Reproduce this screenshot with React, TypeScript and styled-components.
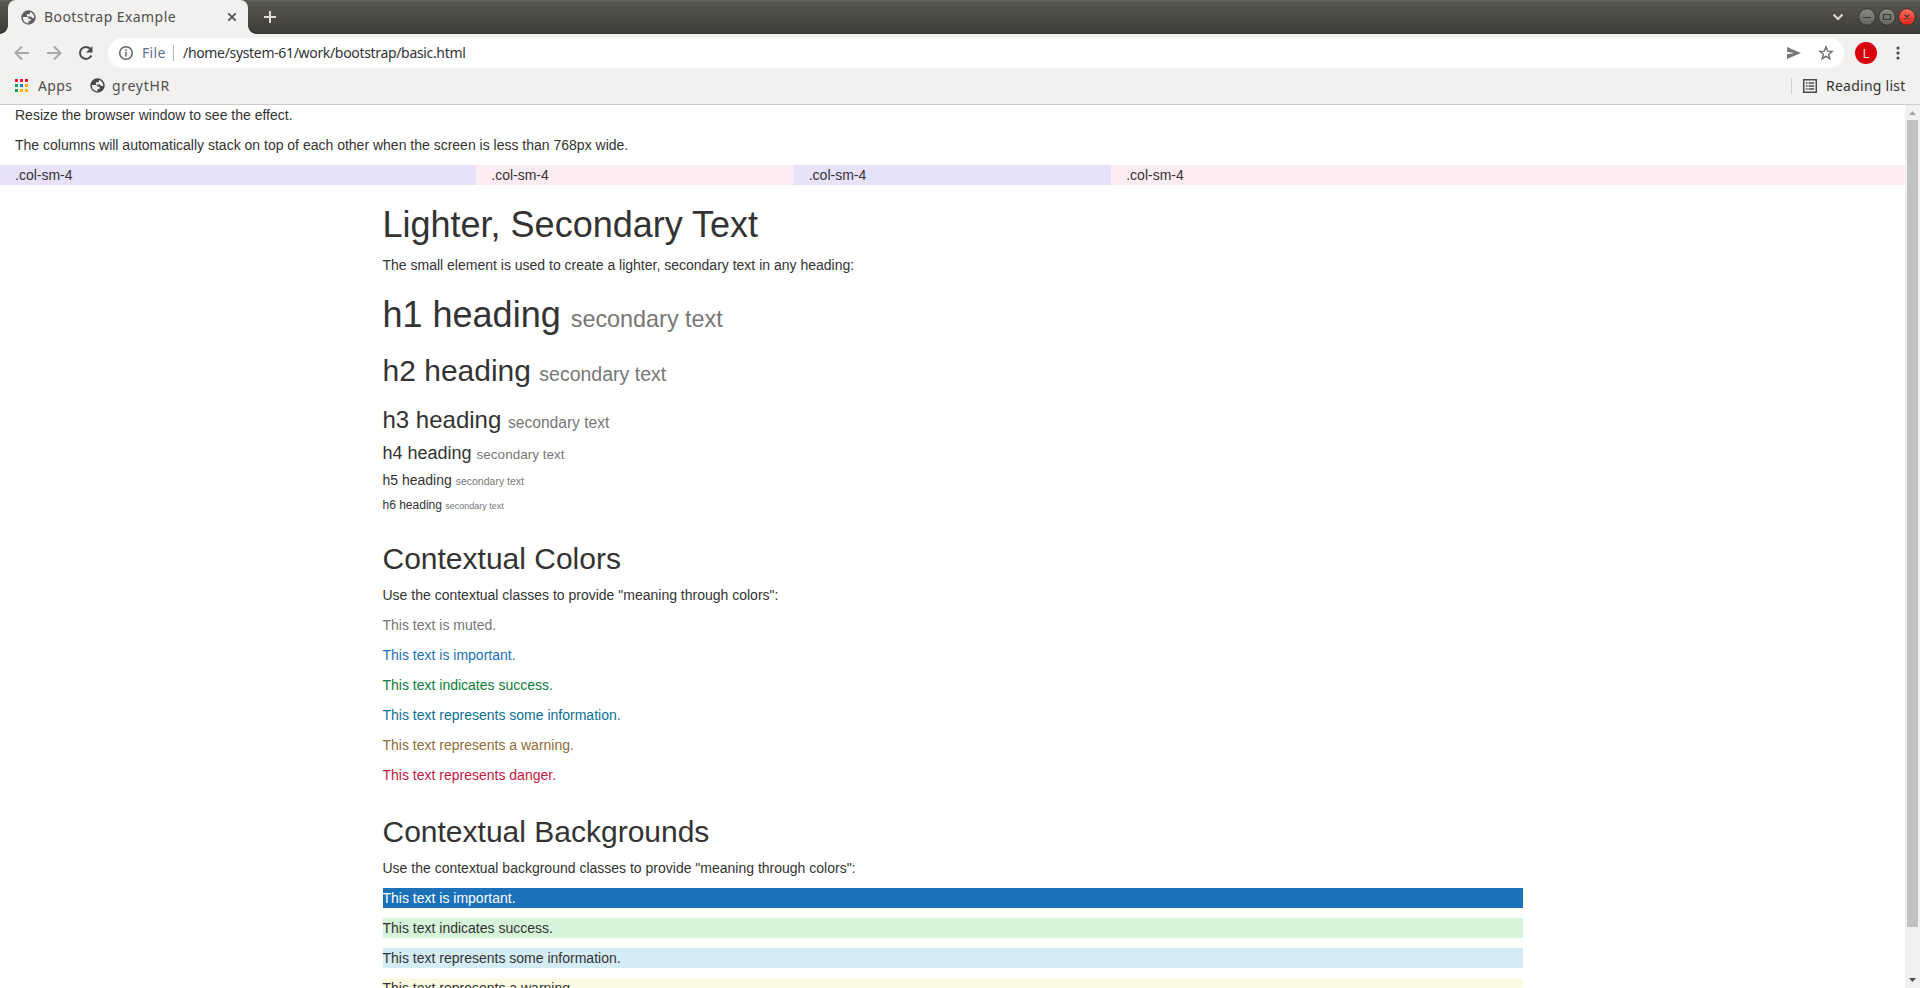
import React from 'react';
import styled, { createGlobalStyle } from 'styled-components';

const GlobalStyle = createGlobalStyle`
  * { box-sizing: border-box; }
  html, body { margin: 0; padding: 0; overflow: hidden; background: #fff; }
`;

const Window = styled.div`
  display: flex;
  flex-direction: column;
  width: 1920px;
  height: 988px;
  overflow: hidden;
  background: #fff;
`;

const uiFont = `'Noto Sans', 'Open Sans', sans-serif`;

const TabStrip = styled.div`
  display: flex;
  align-items: flex-end;
  flex: none;
  height: 34px;
  padding-left: 8px;
  background: linear-gradient(#65655a 0, #59584e 2px, #3c3b37 33px, #35342f 34px);
`;

const Tab = styled.div`
  position: relative;
  display: flex;
  align-items: center;
  width: 240px;
  height: 34px;
  padding: 0 9px 0 13px;
  border-radius: 8px 8px 0 0;
  background: #f2f1f0;
  &::before, &::after {
    content: '';
    position: absolute;
    bottom: 0;
    width: 8px;
    height: 8px;
  }
  &::before { left: -8px; background: radial-gradient(circle at 0 0, transparent 7.5px, #f2f1f0 8px); }
  &::after { right: -8px; background: radial-gradient(circle at 100% 0, transparent 7.5px, #f2f1f0 8px); }
`;

const Label = styled.span<{ $width: number; $color?: string; $tracking?: number }>`
  flex: none;
  width: ${(p) => p.$width}px;
  font: 14px/20px ${uiFont};
  letter-spacing: ${(p) => p.$tracking ?? 0}px;
  color: ${(p) => p.$color ?? '#4f4f4d'};
  white-space: nowrap;
`;

const TabTitle = styled(Label)`
  margin: 0 auto 0 8px;
`;

const NewTab = styled.div`
  display: flex;
  align-items: center;
  height: 34px;
  margin-left: 15px;
`;

const WindowControls = styled.div`
  display: flex;
  align-items: center;
  height: 34px;
  margin-left: auto;
  padding-right: 4px;
`;

const Toolbar = styled.div`
  display: flex;
  align-items: center;
  flex: none;
  height: 38px;
  background: #f2f1f0;
`;

const NavButtons = styled.div`
  display: flex;
  align-items: center;
  gap: 12px;
  width: 108px;
  padding-left: 12px;
`;

const AddressBar = styled.div`
  display: flex;
  align-items: center;
  width: 1736px;
  height: 30px;
  padding: 0 9px 0 9px;
  border-radius: 15px;
  background: #fff;
`;

const Scheme = styled(Label)`
  margin-left: 7px;
`;

const SchemeDivider = styled.div`
  width: 1px;
  height: 16px;
  margin: 0 9px 0 7px;
  background: #b5b5b5;
`;

const AddressActions = styled.div`
  display: flex;
  gap: 14px;
  margin-left: auto;
`;

const Avatar = styled.div`
  width: 22px;
  height: 22px;
  margin-left: 11px;
  border-radius: 50%;
  background: #d8000c;
  color: #f3dfdc;
  font: 13px/22px ${uiFont};
  text-align: center;
`;

const MenuDots = styled.svg`
  margin-left: 18px;
`;

const BookmarkBar = styled.div`
  display: flex;
  align-items: center;
  flex: none;
  height: 33px;
  padding: 0 14px 5px 12px;
  border-bottom: 1px solid #cdccca;
  background: #f2f1f0;
`;

const Bookmark = styled.div`
  display: flex;
  align-items: center;
  gap: 7px;
  margin-right: 16px;
`;

const ReadingList = styled.div`
  display: flex;
  align-items: center;
  gap: 8px;
  height: 16px;
  margin-left: auto;
  padding-left: 10px;
  border-left: 1px solid #d0cfcd;
`;

const Viewport = styled.div`
  display: flex;
  flex: 1;
  min-height: 0;
  overflow: hidden;
`;

const Page = styled.main`
  width: 1905px;
  overflow: hidden;
  font: 14px/20px 'Liberation Sans', Arial, sans-serif;
  color: #333;
`;

const Fluid = styled.div`
  display: flow-root;
  padding: 0 15px;
`;

const Container = styled.section`
  display: flow-root;
  width: 1170px;
  margin: 0 auto;
  padding: 0 15px;
`;

const Row = styled.div`
  display: flex;
  margin: 0 -15px;
`;

const Column = styled.div<{ $span: number; $bg: string }>`
  width: ${(p) => (p.$span / 12) * 100}%;
  padding: 0 15px;
  background: ${(p) => p.$bg};
`;

const Text = styled.p<{ $color?: string; $bg?: string }>`
  margin: 0 0 10px;
  color: ${(p) => p.$color ?? 'inherit'};
  background: ${(p) => p.$bg ?? 'transparent'};
`;

const sizes = [36, 30, 24, 18, 14, 12];

const Heading = styled.h1<{ $level: number }>`
  margin: ${(p) => (p.$level < 4 ? 20 : 10)}px 0 10px;
  font-size: ${(p) => sizes[p.$level - 1]}px;
  font-weight: 500;
  line-height: 1.1;
  small {
    font-size: ${(p) => (p.$level < 4 ? 65 : 75)}%;
    font-weight: 400;
    line-height: 1;
    color: #777;
  }
`;

const ScrollTrack = styled.div`
  display: flex;
  flex-direction: column;
  justify-content: space-between;
  align-items: center;
  width: 15px;
  background: #f1f1f1;
`;

const ScrollThumb = styled.div`
  width: 11px;
  height: 807px;
  margin-bottom: auto;
  background: #c1c1c1;
`;

const Globe = ({ color }: { color: string }) => (
  <svg width="15" height="15" viewBox="0 0 16 16">
    <circle cx="8" cy="8" r="7.700" fill={color} />
    <path d="M2 7.500h4.400c1.300 0 1.600.700 1.600 1.800h2.300v2.300H8v2.600C4.500 14.200 1.800 11.500 2 7.500zM9.600 2v1.100c0 1-.700 1.500-1.600 1.500H6.300v2.300h3.900c.9 0 1.300.700 1.300 1.600h2.500c.400-3.200-1.700-5.700-4.400-6.500z" fill="#f2f1f0" />
  </svg>
);

const dotColors = ['#f0123c', '#f0123c', '#f0123c', '#00a651', '#0a7cf0', '#fdb400', '#00a651', '#fdb400', '#fdb400'];

const columns = [
  { span: 3, bg: '#e7e2f9' },
  { span: 2, bg: '#feecf5' },
  { span: 2, bg: '#e7e2f9' },
  { span: 5, bg: '#feecf5' },
];

const tags = ['h1', 'h2', 'h3', 'h4', 'h5', 'h6'] as const;

const coloredTexts = [
  ['This text is muted.', '#777'],
  ['This text is important.', '#1b72b9'],
  ['This text indicates success.', '#0c7c3c'],
  ['This text represents some information.', '#0b6f95'],
  ['This text represents a warning.', '#906d38'],
  ['This text represents danger.', '#c3183f'],
];

const filledTexts = [
  ['This text is important.', '#1b72b9', '#fff'],
  ['This text indicates success.', '#d6f4d9', '#333'],
  ['This text represents some information.', '#d4ecf6', '#333'],
  ['This text represents a warning.', '#fbfae2', '#333'],
];

export default function App() {
  return (
    <Window>
      <GlobalStyle />
      <TabStrip>
        <Tab>
          <Globe color="#5b6065" />
          <TabTitle $width={134} $tracking={0.43}>Bootstrap Example</TabTitle>
          <svg width="14" height="14" viewBox="0 0 14 14" stroke="#4c4c4a" strokeWidth="1.7">
            <path d="M3.300 3.300l7.400 7.400M10.700 3.300l-7.400 7.400" />
          </svg>
        </Tab>
        <NewTab>
          <svg width="14" height="14" viewBox="0 0 14 14" stroke="#dfdbd2" strokeWidth="2">
            <path d="M7 1v12M1 7h12" />
          </svg>
        </NewTab>
        <WindowControls>
          <svg width="90" height="20" viewBox="0 0 90 20" fill="none">
            <defs>
              <linearGradient id="grey" x2="0" y2="1"><stop stopColor="#8b8a84" /><stop offset="1" stopColor="#65645e" /></linearGradient>
              <linearGradient id="red" x2="0" y2="1"><stop stopColor="#ff6f5c" /><stop offset="1" stopColor="#f1201c" /></linearGradient>
            </defs>
            <path d="M7.500 7.500l4.500 4.500 4.500-4.500" stroke="#dfdbd2" strokeWidth="2" />
            <circle cx="41" cy="10" r="8.300" fill="url(#grey)" stroke="#35342f" />
            <circle cx="61" cy="10" r="8.300" fill="url(#grey)" stroke="#35342f" />
            <circle cx="81" cy="10" r="8.300" fill="url(#red)" stroke="#35342f" />
            <path d="M37 10.500h8M57.500 7.500h7v5h-7zM78.500 7.500l5 5M83.500 7.500l-5 5" stroke="#3c3b37" strokeWidth="1.200" />
          </svg>
        </WindowControls>
      </TabStrip>
      <Toolbar>
        <NavButtons>
          <svg width="20" height="20" viewBox="0 0 20 20" fill="none" stroke="#a9a8a6" strokeWidth="2">
            <path d="M17 10H4M10 3.500L3.500 10l6.500 6.500" />
          </svg>
          <svg width="20" height="20" viewBox="0 0 20 20" fill="none" stroke="#a9a8a6" strokeWidth="2">
            <path d="M3 10h13M10 3.500l6.500 6.500-6.500 6.500" />
          </svg>
          <svg width="20" height="20" viewBox="0 0 20 20">
            <path d="M14.300 5.700A6 6 0 1 0 15.400 12.500" fill="none" stroke="#4c4c4a" strokeWidth="2" />
            <path d="M16.500 3v6.500H10z" fill="#4c4c4a" />
          </svg>
        </NavButtons>
        <AddressBar>
          <svg width="18" height="18" viewBox="0 0 18 18" fill="none" stroke="#5f6368" strokeWidth="1.500">
            <circle cx="9" cy="9" r="6.300" />
            <path d="M9 8v4.500M9 5.300v1.600" />
          </svg>
          <Scheme $width={24} $color="#5f6f8a" $tracking={0.3}>File</Scheme>
          <SchemeDivider />
          <Label $width={290} $color="#333336" $tracking={-0.33}>/home/system-61/work/bootstrap/basic.html</Label>
          <AddressActions>
            <svg width="18" height="18" viewBox="0 0 18 18" fill="#777775">
              <path d="M2 3l14 6-14 6v-4.700L9 9 2 7.700z" />
            </svg>
            <svg width="18" height="18" viewBox="0 0 18 18" fill="none" stroke="#6c6c6a" strokeWidth="1.400">
              <path d="M9 2.900l1.700 4.200 4.500.300-3.500 2.900 1.100 4.400L9 12.300l-3.800 2.400 1.100-4.400-3.500-2.900 4.500-.300z" />
            </svg>
          </AddressActions>
        </AddressBar>
        <Avatar>L</Avatar>
        <MenuDots width="6" height="16" viewBox="0 0 6 16" fill="#4c4c4a">
          <circle cx="3" cy="3" r="1.600" /><circle cx="3" cy="8" r="1.600" /><circle cx="3" cy="13" r="1.600" />
        </MenuDots>
      </Toolbar>
      <BookmarkBar>
        <Bookmark>
          <svg width="19" height="14" viewBox="0 0 19 14">
            {dotColors.map((c, i) => (
              <rect key={i} x={3 + (i % 3) * 5} y={Math.floor(i / 3) * 5} width="3" height="3" fill={c} />
            ))}
          </svg>
          <Label $width={36} $tracking={0.4}>Apps</Label>
        </Bookmark>
        <Bookmark>
          <Globe color="#474746" />
          <Label $width={60} $tracking={0.7}>greytHR</Label>
        </Bookmark>
        <ReadingList>
          <svg width="16" height="16" viewBox="0 0 16 16" fill="none" stroke="#4c4c4a" strokeWidth="1.500">
            <path d="M1.700 1.700h12.600v12.600H1.700zM3.800 5h1.700M3.800 8h1.700M3.800 11h1.700M6.500 5h5.700M6.500 8h5.700M6.500 11h5.700" />
          </svg>
          <Label $width={80} $color="#333332" $tracking={0.25}>Reading list</Label>
        </ReadingList>
      </BookmarkBar>
      <Viewport>
        <Page>
          <Fluid>
            <Text>Resize the browser window to see the effect.</Text>
            <Text>The columns will automatically stack on top of each other when the screen is less than 768px wide.</Text>
            <Row>
              {columns.map((c, i) => (
                <Column key={i} $span={c.span} $bg={c.bg}>.col-sm-4</Column>
              ))}
            </Row>
          </Fluid>
          <Container>
            <Heading $level={1}>Lighter, Secondary Text</Heading>
            <Text>The small element is used to create a lighter, secondary text in any heading:</Text>
            {tags.map((tag, i) => (
              <Heading key={tag} as={tag} $level={i + 1}>{tag} heading <small>secondary text</small></Heading>
            ))}
          </Container>
          <Container>
            <Heading as="h2" $level={2}>Contextual Colors</Heading>
            <Text>Use the contextual classes to provide "meaning through colors":</Text>
            {coloredTexts.map(([t, c]) => <Text key={t} $color={c}>{t}</Text>)}
          </Container>
          <Container>
            <Heading as="h2" $level={2}>Contextual Backgrounds</Heading>
            <Text>Use the contextual background classes to provide "meaning through colors":</Text>
            {filledTexts.map(([t, bg, c]) => <Text key={t} $bg={bg} $color={c}>{t}</Text>)}
          </Container>
        </Page>
        <ScrollTrack>
          <svg width="15" height="15" viewBox="0 0 15 15"><path d="M4 10h7L7.500 6z" fill="#a3a3a3" /></svg>
          <ScrollThumb />
          <svg width="15" height="15" viewBox="0 0 15 15"><path d="M4 5h7L7.500 9z" fill="#505050" /></svg>
        </ScrollTrack>
      </Viewport>
    </Window>
  );
}
